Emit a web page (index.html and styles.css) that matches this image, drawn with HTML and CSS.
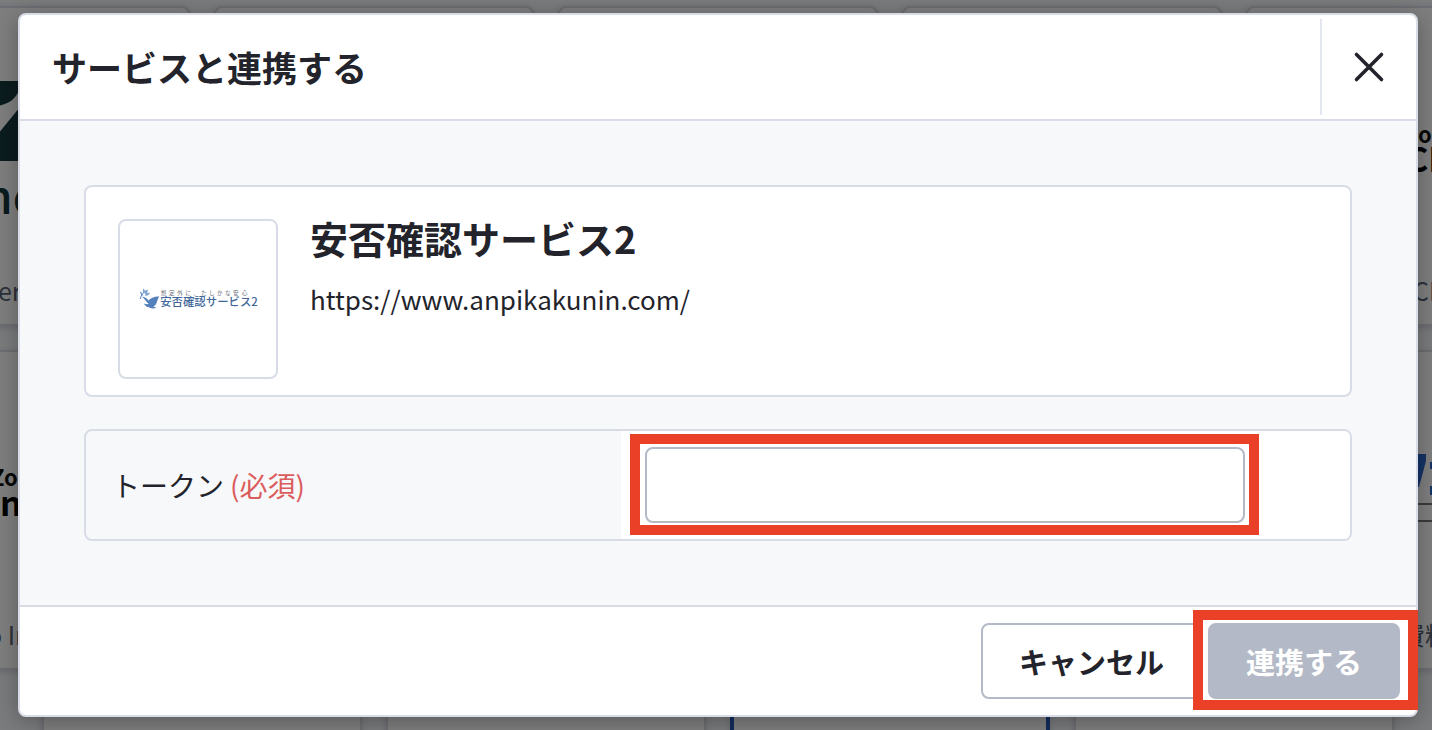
FILE: index.html
```html
<!DOCTYPE html>
<html lang="ja">
<head>
<meta charset="utf-8">
<meta name="viewport" content="width=device-width, initial-scale=1">
<title>サービスと連携する</title>
<link rel="stylesheet" href="styles.css">
</head>
<body>
<div class="catalog" aria-hidden="true">
  <div class="catalog-row">
    <div class="card">
      <svg class="card-art" viewBox="0 0 320 320">
        <path fill="#17383c" d="M90 75H150V78C150 91 138 100 124 100C110 100 98 90 90 75ZM150 101V155H106Z"/>
        <text x="114" y="208" class="art-zen">ne</text>
        <text x="128" y="295" class="art-caption">er</text>
      </svg>
    </div>
    <div class="card"></div>
    <div class="card"></div>
    <div class="card"></div>
    <div class="card">
      <svg class="card-art" viewBox="0 0 320 320">
        <text x="172" y="137" class="art-zoho">oh</text>
        <text x="160" y="166" class="art-product">CR</text>
        <text x="167" y="295" class="art-caption">CR</text>
      </svg>
    </div>
  </div>
  <div class="catalog-row">
    <div class="card">
      <svg class="card-art" viewBox="0 0 320 320">
        <text x="121" y="136" class="art-zoho">Zoh</text>
        <text x="130" y="166" class="art-product">n</text>
        <text x="117" y="295" class="art-caption">o In</text>
      </svg>
    </div>
    <div class="card"></div>
    <div class="card"></div>
    <div class="card"></div>
    <div class="card">
      <svg class="card-art" viewBox="0 0 320 320">
        <path fill="#2b67cf" d="M165 104H180V111L173 137H165ZM184 112H190V119H184ZM184 136H190V145H184Z"/>
        <path fill="#777" d="M160 153H192V155H160ZM160 170H192V172H160Z"/>
        <text x="154" y="295" class="art-caption">費料</text>
      </svg>
    </div>
  </div>
  <div class="catalog-row">
    <div class="card"></div>
    <div class="card"></div>
    <div class="card card-selected"></div>
    <div class="card"></div>
  </div>
</div>

<div class="overlay">
  <form class="dialog" role="dialog" aria-labelledby="dialog-title">
    <header class="dialog-header">
      <h1 class="dialog-title" id="dialog-title">サービスと連携する</h1>
      <button class="close" type="button" aria-label="閉じる">
        <svg width="32" height="32" viewBox="0 0 32 32"><path d="M3.500 3.500L28.500 28.500M28.500 3.500L3.500 28.500" fill="none" stroke="currentColor" stroke-width="3.600" stroke-linecap="round"/></svg>
      </button>
    </header>

    <div class="dialog-body">
      <section class="service">
        <div class="service-logo">
          <svg width="122" height="24" viewBox="0 0 1220 240" role="img" aria-label="安否確認サービス2">
            <g transform="translate(22 8)">
              <path fill="#5480bb" d="M25 90C60 92 80 106 92 128C115 104 155 82 200 87C190 105 184 120 179 135C172 165 158 182 142 184C149 192 162 197 176 200C143 211 109 207 91 193C68 188 54 175 48 156C65 166 86 166 96 160C67 145 63 110 25 90Z"/>
              <path fill="none" stroke="#5480bb" stroke-width="10" d="M10 112C18 75 38 48 68 28"/>
              <path fill="#7ba0d0" d="M44 8C58 24 60 44 50 60C34 46 32 27 44 8ZM84 14C88 38 80 56 60 64C54 42 64 24 84 14ZM108 50C98 72 80 82 56 78C64 58 82 46 108 50ZM8 38C28 46 40 62 40 82C20 76 8 60 8 38Z"/>
            </g>
            <text class="logo-tag" y="76" x="238 321 402 482 566 641 719 801 881 961 1048">想定外に、たしかな安心</text>
            <text class="logo-name" x="232" y="194">安否確認サービス2</text>
          </svg>
        </div>
        <div class="service-info">
          <h2 class="service-name">安否確認サービス2</h2>
          <p class="service-url">https://www.anpikakunin.com/</p>
        </div>
      </section>

      <div class="field">
        <label class="field-label" for="token">トークン<span class="required">(必須)</span></label>
        <div class="field-value">
          <div class="marked marked-input">
            <input class="token" id="token" type="text" required>
          </div>
        </div>
      </div>
    </div>

    <footer class="dialog-footer">
      <button class="button" type="button">キャンセル</button>
      <div class="marked marked-submit">
        <button class="button button-primary" type="submit" disabled>連携する</button>
      </div>
    </footer>
  </form>
</div>
</body>
</html>
```
FILE: styles.css
```css
* {
  box-sizing: border-box;
}

body {
  margin: 0;
  height: 100vh;
  overflow: hidden;
  position: relative;
  background: #f7f8fb;
  color: #23242b;
  font-family: "Noto Sans CJK JP", "Noto Sans", sans-serif;
}

h1, h2, p {
  margin: 0;
}

button, input {
  font: inherit;
  color: inherit;
}

/* Service list behind the dialog */
.catalog {
  display: flex;
  flex-direction: column;
  gap: 24px;
  height: 100%;
  padding: 6px 0 0 4px;
  overflow: hidden;
}

.catalog-row {
  display: flex;
  justify-content: center;
  gap: 24px;
}

.card {
  flex: none;
  width: 320px;
  height: 320px;
  border: 2px solid #d8dce6;
  border-radius: 8px;
  background: #fff;
  box-shadow: 0 2px 6px rgba(60, 70, 100, 0.2);
}

.card-selected {
  border: 4px solid #2458b8;
}

.card-art {
  display: block;
  width: 320px;
  height: 320px;
  margin: -2px;
}

.art-zen {
  font: 500 46px "Noto Sans CJK JP", sans-serif;
  fill: #17383c;
}

.art-zoho {
  font: 700 22px "Noto Sans CJK JP", sans-serif;
  fill: #111;
}

.art-product {
  font: 700 34px "Noto Sans CJK JP", sans-serif;
  fill: #000;
}

.art-caption {
  font: 400 25px "Noto Sans CJK JP", sans-serif;
  fill: #596273;
}

/* Dialog */
.overlay {
  position: absolute;
  inset: 0;
  display: flex;
  align-items: center;
  padding: 0 14px 0 18px;
  background: rgba(0, 0, 0, 0.5);
}

.dialog {
  flex: 1;
  min-width: 0;
  border: 2px solid #d8dce6;
  border-radius: 8px;
  background: #fff;
  box-shadow: 0 4px 24px rgba(0, 0, 0, 0.3);
}

.dialog-header {
  display: flex;
  align-items: center;
  justify-content: space-between;
  padding: 4px 0 4px 32px;
  border-bottom: 2px solid #d8dce6;
}

.dialog-title {
  font-size: 35px;
  line-height: 52px;
  font-weight: 700;
}

.close {
  display: flex;
  align-items: center;
  justify-content: center;
  width: 96px;
  height: 96px;
  padding: 0;
  border: 0;
  border-left: 2px solid #e4e7ef;
  background: none;
}

.dialog-body {
  display: grid;
  gap: 32px;
  padding: 64px;
  background: #f7f8fa;
}

.service {
  display: flex;
  gap: 32px;
  padding: 32px 32px 16px;
  border: 2px solid #d8dce6;
  border-radius: 8px;
  background: #fff;
}

.service-logo {
  display: flex;
  align-items: center;
  justify-content: center;
  width: 160px;
  height: 160px;
  border: 2px solid #d8dce6;
  border-radius: 8px;
}

.logo-tag {
  font-size: 56px;
  fill: #666b78;
}

.logo-name {
  font-size: 114px;
  font-weight: 500;
  fill: #42689b;
}

.service-name {
  font-size: 38px;
  line-height: 38px;
  font-weight: 700;
}

.service-url {
  margin-top: 20px;
  font-size: 26px;
  line-height: 44px;
}

.field {
  display: flex;
  border: 2px solid #d8dce6;
  border-radius: 8px;
  overflow: hidden;
}

.field-label {
  flex: 0 0 535px;
  padding: 32px 26px;
  font-size: 28px;
  line-height: 44px;
}

.required {
  margin-left: 6px;
  color: #db5c5c;
}

.field-value {
  flex: 1;
  min-width: 0;
  padding: 16px 24px;
  background: #fff;
}

.token {
  display: block;
  width: 100%;
  height: 76px;
  padding: 0 16px;
  border: 2px solid #b3b9c6;
  border-radius: 8px;
  background: #fff;
  font-size: 28px;
}

.dialog-footer {
  display: flex;
  justify-content: flex-end;
  gap: 6px;
  padding: 16px;
  border-top: 2px solid #d8dce6;
}

.button {
  height: 76px;
  padding: 0 36px;
  border: 2px solid #b3b9c6;
  border-radius: 8px;
  background: #fff;
  font-size: 29px;
  font-weight: 700;
}

.button-primary {
  display: block;
  background: #b3b9c6;
  color: #fff;
}

/* Red frames drawn over the controls to point at */
.marked {
  position: relative;
}

.marked::after {
  content: "";
  position: absolute;
  border: 10px solid #e94027;
  pointer-events: none;
}

.marked-input {
  max-width: 600px;
}

.marked-input::after {
  inset: -13px -14px -12px -15px;
}

.marked-submit::after {
  inset: -13px -18px -11px -15px;
}
```
